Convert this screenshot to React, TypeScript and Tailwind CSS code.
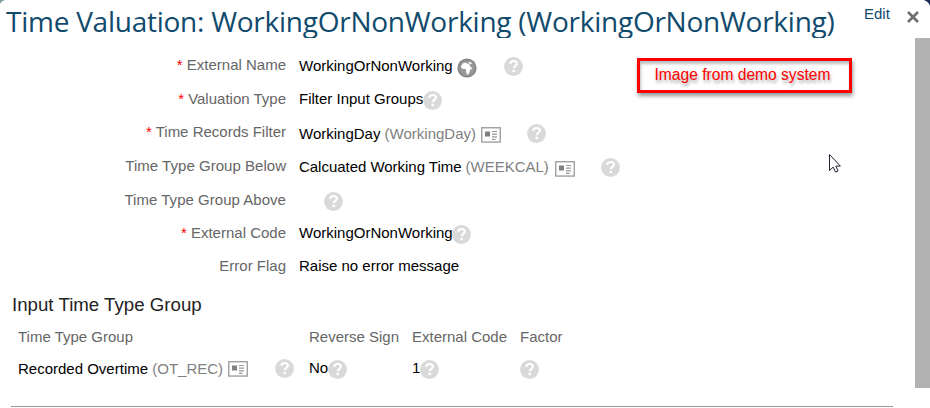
import type { ReactNode } from 'react';

function Help({ className = '' }: { className?: string }) {
  return (
    <svg className={`size-[19px] shrink-0 ${className}`} viewBox="0 0 19 19" fill="none">
      <circle cx="9.5" cy="9.5" r="9.4" fill="#d9d9d9" />
      <path d="M6.2 6.9C6.4 4.9 7.7 4 9.6 4c2 0 3.3 1 3.3 2.6 0 2.2-3.1 2.3-3.1 4.7" stroke="#fff" strokeWidth="2.2" />
      <rect x="8.5" y="12.8" width="2.5" height="2.4" fill="#fff" />
    </svg>
  );
}

function Globe({ className = '' }: { className?: string }) {
  return (
    <svg className={`size-[20px] shrink-0 ${className}`} viewBox="0 0 20 20">
      <circle cx="10" cy="10" r="9.6" fill="#858585" />
      <circle cx="10" cy="10" r="8" fill="#979797" />
      <path d="M4 8.2 5.6 5.6 8.4 4.6l1.4.9 2.2.2.8 1.7 1 1.9 1.5.1-.9 1.6-1.6 1.5-.4 2.1-1.2 2-1.3-.1-.9-3.2-.3-2.2-2.5-.1-1.8-1Z" fill="#fff" />
      <path d="m11.4 4 2.6.3 1 1.5-2 .4Z" fill="#fff" />
    </svg>
  );
}

function Card({ className = '' }: { className?: string }) {
  return (
    <svg className={`h-[16px] w-[20px] shrink-0 ${className}`} viewBox="0 0 20 16">
      <rect x=".75" y=".75" width="18.5" height="14.3" fill="#fff" stroke="#999" strokeWidth="1.3" />
      <rect x="4" y="4.5" width="5" height="5" fill="#808080" />
      <path d="M11 4.5h5M11 7.2h5M11 9.9h5M11 12.4h3.5" stroke="#999" strokeWidth="1.2" />
    </svg>
  );
}

function Row({ label, required, className, children }: { label: string; required?: boolean; className: string; children?: ReactNode }) {
  return (
    <div className={`flex items-start ${className}`}>
      <div className="w-[286px] shrink-0 text-right text-[#666]">
        {required && <span className="text-[#f00]">* </span>}
        {label}
      </div>
      <div className="ml-[13px] flex items-start">{children}</div>
    </div>
  );
}

export default function App() {
  return (
    <div className="relative flex h-[408px] w-[930px] flex-col overflow-hidden bg-white font-['Liberation_Sans',Arial,sans-serif] text-[15px] leading-5 whitespace-nowrap text-black">
      <header className="flex h-[38px] shrink-0 items-start overflow-hidden">
        <h1 className="ml-[6px] w-[858px] font-['Open_Sans',sans-serif] text-[28px] leading-[42px] tracking-[-0.25px] text-[#104a6d]">
          Time Valuation: WorkingOrNonWorking (WorkingOrNonWorking)
        </h1>
        <a className="mt-[4px] w-[43px] text-[#104a6d]">Edit</a>
        <svg className="mt-[11px] size-[12px]" viewBox="0 0 12 12" stroke="#707070" strokeWidth="2.7">
          <path d="M1 1l10 10M11 1 1 11" />
        </svg>
      </header>

      <div className="flex grow">
        <main className="w-[915px] pt-[17px]">
          <Row label="External Name" required className="h-[34px]">
            <span className="mt-px w-[158px]">WorkingOrNonWorking</span>
            <Globe className="mt-[3px]" />
            <Help className="mt-[2px] ml-[27px]" />
          </Row>
          <Row label="Valuation Type" required className="h-[33px]">
            <span className="w-[124px]">Filter Input Groups</span>
            <Help className="mt-[2px]" />
          </Row>
          <Row label="Time Records Filter" required className="h-[34px]">
            <span className="mt-[2px] w-[182px]">
              WorkingDay <span className="text-[#808080]">(WorkingDay)</span>
            </span>
            <Card className="mt-[5px]" />
            <Help className="mt-[2px] ml-[26px]" />
          </Row>
          <Row label="Time Type Group Below" className="h-[34px] tracking-[0.03px]">
            <span className="mt-px w-[256px] tracking-[-0.03px]">
              Calcuated Working Time <span className="text-[#808080]">(WEEKCAL)</span>
            </span>
            <Card className="mt-[5px]" />
            <Help className="mt-[2px] ml-[26px]" />
          </Row>
          <Row label="Time Type Group Above" className="h-[33px] tracking-[0.03px]">
            <Help className="mt-[2px] ml-[25px]" />
          </Row>
          <Row label="External Code" required className="h-[33px]">
            <span className="w-[153px]">WorkingOrNonWorking</span>
            <Help className="mt-[2px]" />
          </Row>
          <Row label="Error Flag" className="h-[37px]">
            <span>Raise no error message</span>
          </Row>

          <h2 className="ml-[12px] h-[34px] text-[18.7px] leading-6 text-[#222]">Input Time Type Group</h2>

          <div className="ml-[18px] grid grid-cols-[291px_103px_108px_60px] text-[#666]">
            <span className="h-8">Time Type Group</span>
            <span>Reverse Sign</span>
            <span>External Code</span>
            <span>Factor</span>
            <div className="flex items-start">
              <span className="w-[210px] text-black">
                Recorded Overtime <span className="text-[#808080]">(OT_REC)</span>
              </span>
              <Card className="mt-[2px]" />
              <Help className="ml-[27px]" />
            </div>
            <div className="flex items-start text-black">
              <span className="-mt-px w-[19px]">No</span>
              <Help className="mt-px" />
            </div>
            <div className="flex items-start text-black">
              <span className="-mt-px w-[8px]">1</span>
              <Help className="mt-px" />
            </div>
            <Help className="mt-px" />
          </div>
          <hr className="mt-[27px] ml-[11px] w-[882px] border-t border-[#999]" />
        </main>
        <div className="h-[350px] w-[15px] bg-[#b2b2b2]" />
      </div>

      <div className="absolute top-[58px] left-[637px] flex h-[35px] w-[215px] justify-center border-3 border-[#f00] pt-[4px] pr-[4px] text-[15.6px] text-[#f00] shadow-[1px_3px_4px_rgba(0,0,0,0.4),inset_1px_3px_3px_rgba(0,0,0,0.25)] [text-shadow:1px_3px_3px_rgba(0,0,0,0.35)]">
        Image from demo system
      </div>

      <svg className="absolute top-[153px] left-[828px] h-[21px] w-[14px]" viewBox="0 0 14 21">
        <path d="M1.5 1.5v16l3.7-3.4 2.3 5 2.5-1.1-2.2-4.9h4.6Z" fill="#fff" stroke="#223" strokeWidth="1" />
      </svg>
      <svg className="absolute top-0 left-0 size-[5px]" viewBox="0 0 5 5">
        <path d="M0 0h5Q1 1 0 4Z" fill="#789b9e" />
      </svg>
      <svg className="absolute top-0 right-0 size-[6px]" viewBox="0 0 6 6">
        <path d="M0 0h6v6Q5 2 0 0Z" fill="#1c2b55" />
      </svg>
    </div>
  );
}
